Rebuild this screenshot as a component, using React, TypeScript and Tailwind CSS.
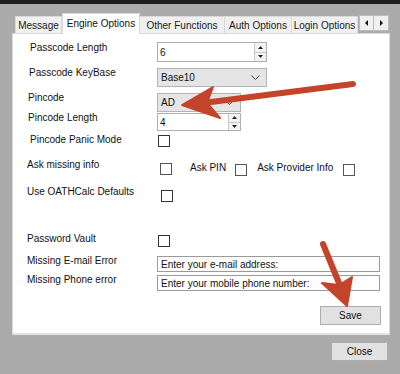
import React from 'react';

const font = "font-['Liberation_Sans',Arial,sans-serif]";

function Spin() {
  return (
    <div className="flex flex-col w-[12px] h-full border-l border-[#c8c8c8] bg-[#f3f3f3]">
      <div className="flex-1 flex items-center justify-center border-b border-[#c8c8c8]">
        <svg width="5" height="3" viewBox="0 0 5 3"><path d="M2.5 0 L5 3 L0 3 Z" fill="#222" /></svg>
      </div>
      <div className="flex-1 flex items-center justify-center">
        <svg width="5" height="3" viewBox="0 0 5 3"><path d="M0 0 L5 0 L2.5 3 Z" fill="#222" /></svg>
      </div>
    </div>
  );
}

function Chevron() {
  return (
    <svg width="9" height="5" viewBox="0 0 9 5" className="mr-[6px]">
      <polyline points="0.5,0.5 4.5,4.5 8.5,0.5" fill="none" stroke="#444" strokeWidth="1" />
    </svg>
  );
}

function Check({ className = '' }: { className?: string }) {
  return <div className={`w-[12px] h-[12px] border border-[#333] bg-white shrink-0 ${className}`} />;
}

function Tab({ label, active = false, w }: { label: string; active?: boolean; w: string }) {
  if (active) {
    return (
      <div className={`${w} h-[21px] -mb-px relative z-10 bg-white border border-b-0 border-[#d9d9d9] flex items-center justify-center pb-[2px]`}>
        {label}
      </div>
    );
  }
  return (
    <div className={`${w} h-[17px] bg-[#f0f0f0] border border-b-0 border-l-0 first:border-l border-[#d9d9d9] flex items-center justify-center text-[#1a1a1a]`}>
      {label}
    </div>
  );
}

export default function App() {
  return (
    <div className={`relative w-[400px] h-[374px] bg-[#ababab] overflow-hidden text-[10px] text-[#111] ${font}`}>
      <div className="h-[4px] bg-[#1e1e1e]" />

      <div className="ml-[12px] mt-[9px] w-[378px]">
        {/* tabs */}
        <div className="flex items-end h-[20px] pl-[3px]">
          <Tab label="Message" w="w-[47px]" />
          <Tab label="Engine Options" w="w-[78px]" active />
          <Tab label="Other Functions" w="w-[85px]" />
          <Tab label="Auth Options" w="w-[67px]" />
          <Tab label="Login Options" w="w-[66px]" />
          <div className="flex h-[16px] mb-[2px] ml-[1px]">
            <div className="w-[15px] bg-[#f0f0f0] border border-[#bdbdbd] flex items-center justify-center">
              <svg width="3" height="6" viewBox="0 0 3 6"><path d="M3 0 L0 3 L3 6 Z" fill="#111" /></svg>
            </div>
            <div className="w-[15px] bg-[#f0f0f0] border border-l-0 border-[#bdbdbd] flex items-center justify-center">
              <svg width="3" height="6" viewBox="0 0 3 6"><path d="M0 0 L3 3 L0 6 Z" fill="#111" /></svg>
            </div>
          </div>
        </div>

        {/* panel */}
        <div className="h-[302px] bg-white border border-[#d9d9d9] border-b-2 border-b-[#e2e2e2] pt-[7px]">
          {/* Passcode Length */}
          <div className="flex h-[25px]">
            <div className="w-[144px] pl-[17px] leading-[13px]">Passcode Length</div>
            <div className="mt-[1px] w-[110px] h-[20px] border border-[#aeaeae] flex items-stretch">
              <div className="flex-1 pl-[2px] flex items-center">6</div>
              <Spin />
            </div>
          </div>
          {/* KeyBase */}
          <div className="flex h-[25px]">
            <div className="w-[144px] pl-[16px] leading-[13px]">Passcode KeyBase</div>
            <div className="mt-[2px] w-[110px] h-[19px] border border-[#b4b4b4] bg-[#e5e5e5] flex items-center justify-between">
              <span className="pl-[3px]">Base10</span>
              <Chevron />
            </div>
          </div>
          {/* Pincode */}
          <div className="flex h-[20px]">
            <div className="w-[144px] pl-[15px] leading-[13px]">Pincode</div>
            <div className="mt-[2px] w-[84px] h-[19px] border border-[#b4b4b4] bg-[#e5e5e5] flex items-center justify-between">
              <span className="pl-[3px]">AD</span>
              <Chevron />
            </div>
          </div>
          {/* Pincode Length */}
          <div className="flex h-[22px]">
            <div className="w-[144px] pl-[15px] leading-[13px]">Pincode Length</div>
            <div className="mt-[2px] w-[84px] h-[18px] border border-[#aeaeae] flex items-stretch">
              <div className="flex-1 pl-[2px] flex items-center">4</div>
              <Spin />
            </div>
          </div>
          {/* Panic */}
          <div className="flex h-[18px]">
            <div className="w-[145px] pl-[17px] leading-[13px]">Pincode Panic Mode</div>
            <Check className="mt-[2px]" />
          </div>
          {/* Ask missing info */}
          <div className="flex h-[29px] items-start">
            <div className="w-[147px] pl-[14px] leading-[13px] mt-[7px]">Ask missing info</div>
            <Check className="mt-[12px] border-[#555]" />
            <div className="ml-[18px] mt-[10px] leading-[13px]">Ask PIN</div>
            <Check className="ml-[9px] mt-[13px] border-[#555]" />
            <div className="ml-[10px] mt-[10px] leading-[13px]">Ask Provider Info</div>
            <Check className="ml-[10px] mt-[13px] border-[#555]" />
          </div>
          {/* OATHCalc */}
          <div className="flex h-[30px] items-start">
            <div className="w-[148px] pl-[14px] leading-[13px] mt-[5px]">Use OATHCalc Defaults</div>
            <Check className="mt-[10px]" />
          </div>
          {/* Password Vault */}
          <div className="flex h-[40px] items-start">
            <div className="w-[145px] pl-[14px] leading-[13px] mt-[22px]">Password Vault</div>
            <Check className="mt-[25px]" />
          </div>
          {/* email */}
          <div className="flex h-[23px] items-start">
            <div className="w-[144px] pl-[14px] leading-[13px] mt-[4px]">Missing E-mail Error</div>
            <div className="mt-[6px] w-[223px] h-[16px] border border-[#9a9a9a] pl-[3px] flex items-center">Enter your e-mail address:</div>
          </div>
          {/* phone */}
          <div className="flex h-[20px] items-start">
            <div className="w-[144px] pl-[14px] leading-[13px] mt-[0px]">Missing Phone error</div>
            <div className="mt-[2px] w-[223px] h-[16px] border border-[#9a9a9a] pl-[3px] flex items-center">Enter your mobile phone number:</div>
          </div>
          {/* save */}
          <div className="flex justify-end pr-[8px] mt-[13px]">
            <div className="w-[61px] h-[19px] bg-[#e1e1e1] border border-[#adadad] flex items-center justify-center">Save</div>
          </div>
        </div>
      </div>

      <div className="flex justify-end pr-[12px] mt-[7px]">
        <div className="w-[57px] h-[19px] bg-[#e1e1e1] border border-[#adadad] flex items-center justify-center">Close</div>
      </div>

      {/* annotation arrows */}
      <svg className="absolute inset-0 pointer-events-none" width="400" height="374" viewBox="0 0 400 374">
        <line x1="353" y1="84" x2="203" y2="103" stroke="#c3442b" strokeWidth="6" strokeLinecap="round" />
        <path d="M182 105 L213 87 L207 103 L220 118 Z" fill="#c3442b" stroke="#c3442b" strokeWidth="2" strokeLinejoin="round" />
        <line x1="323" y1="244" x2="341" y2="288" stroke="#c3442b" strokeWidth="6" strokeLinecap="round" />
        <path d="M347 306 L322 283 L339 285 L352 277 Z" fill="#c3442b" stroke="#c3442b" strokeWidth="2" strokeLinejoin="round" />
      </svg>
    </div>
  );
}
